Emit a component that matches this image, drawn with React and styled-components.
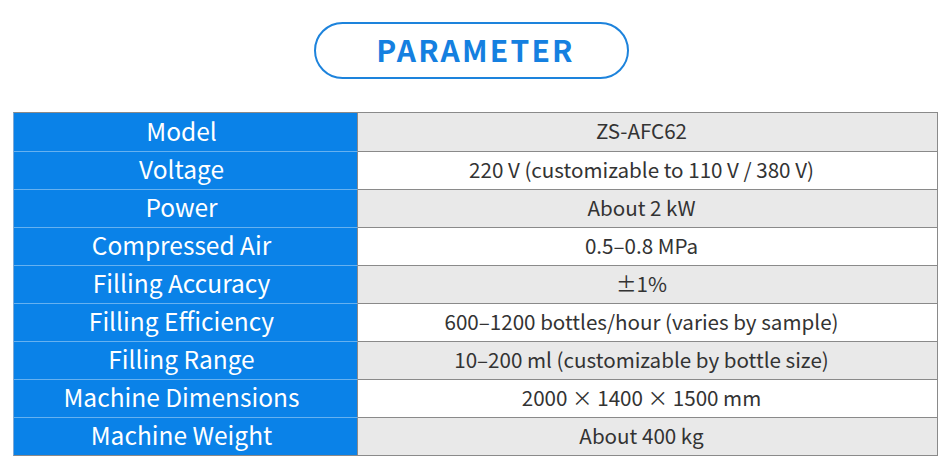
import React from 'react';
import styled, { createGlobalStyle } from 'styled-components';

const GlobalStyle = createGlobalStyle`
    html, body {
        margin: 0;
        padding: 0;
        background: #ffffff;
    }
    body {
        font-family: "Noto Sans CJK JP", "Noto Sans", sans-serif;
    }
`;

const Page = styled.div`
    width: 944px;
    height: 474px;
    padding: 22px 0 0 13px;
    box-sizing: border-box;
    display: flex;
    flex-direction: column;
`;

const TitlePill = styled.div`
    align-self: flex-start;
    margin-left: 301px;
    width: 315px;
    height: 57px;
    box-sizing: border-box;
    padding: 0 0 3px 8px;
    border: 2px solid #1d83dc;
    border-radius: 29px;
    display: flex;
    align-items: center;
    justify-content: center;
    color: #1580e0;
    font-weight: 700;
    font-size: 30px;
    letter-spacing: 2.2px;
`;

const Table = styled.div`
    margin-top: 33px;
    width: 925px;
    box-sizing: border-box;
    display: grid;
    grid-template-columns: 344px 1fr;
    border: 1px solid #8a8a8a;
    border-left-color: #7ea9d6;
`;

const Cell = styled.div`
    height: 38px;
    box-sizing: border-box;
    padding-bottom: 4px;
    display: flex;
    align-items: center;
    justify-content: center;
    white-space: nowrap;
`;

const Label = styled(Cell)`
    padding-right: 8px;
    background: #0a82e8;
    color: #ffffff;
    font-size: 24.5px;
    border-top: ${p => (p.$first ? 'none' : '1px solid #66b1f0')};
    border-right: 1px solid #8a8a8a;
`;

const Value = styled(Cell)`
    padding-right: 12px;
    background: ${p => (p.$shade ? '#e9e9e9' : '#ffffff')};
    color: #333333;
    font-size: 20.6px;
    border-top: ${p => (p.$first ? 'none' : '1px solid #8a8a8a')};
`;

const rows = [
    ['Model', 'ZS-AFC62'],
    ['Voltage', '220 V (customizable to 110 V / 380 V)'],
    ['Power', 'About 2 kW'],
    ['Compressed Air', '0.5–0.8 MPa'],
    ['Filling Accuracy', '±1%'],
    ['Filling Efficiency', '600–1200 bottles/hour (varies by sample)'],
    ['Filling Range', '10–200 ml (customizable by bottle size)'],
    ['Machine Dimensions', '2000 × 1400 × 1500 mm'],
    ['Machine Weight', 'About 400 kg'],
];

const App = () => {
    return (
        <>
            <GlobalStyle />
            <Page>
                <TitlePill>PARAMETER</TitlePill>
                <Table>
                    {rows.map(([label, value], i) => (
                        <React.Fragment key={label}>
                            <Label $first={i === 0}>{label}</Label>
                            <Value $first={i === 0} $shade={i % 2 === 0}>
                                {value}
                            </Value>
                        </React.Fragment>
                    ))}
                </Table>
            </Page>
        </>
    );
};

export default App;
